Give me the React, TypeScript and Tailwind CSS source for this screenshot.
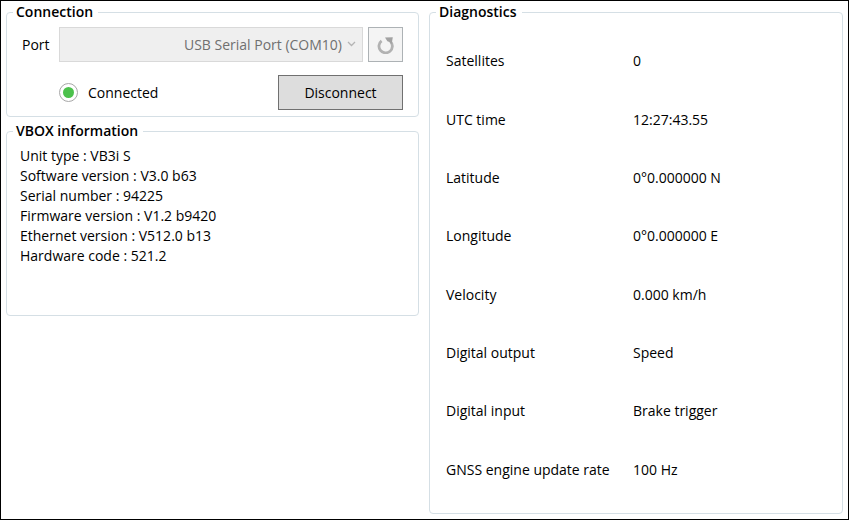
import React, { useState } from 'react'

interface PanelProps {
  title: string
  className?: string
  children: React.ReactNode
}

const vboxInfo = [
  { label: 'Unit type', value: 'VB3i S' },
  { label: 'Software version', value: 'V3.0 b63' },
  { label: 'Serial number', value: '94225' },
  { label: 'Firmware version', value: 'V1.2 b9420' },
  { label: 'Ethernet version', value: 'V512.0 b13' },
  { label: 'Hardware code', value: '521.2' }
]

const diagnostics = [
  { label: 'Satellites', value: '0' },
  { label: 'UTC time', value: '12:27:43.55' },
  { label: 'Latitude', value: '0°0.000000 N' },
  { label: 'Longitude', value: '0°0.000000 E' },
  { label: 'Velocity', value: '0.000 km/h' },
  { label: 'Digital output', value: 'Speed' },
  { label: 'Digital input', value: 'Brake trigger' },
  { label: 'GNSS engine update rate', value: '100 Hz' }
]

const Panel: React.FC<PanelProps> = ({ title, className = '', children }) => (
  <fieldset className={`min-w-0 rounded border border-[#d5dfe5] px-1.5 ${className}`}>
    <legend className="pr-[5px] pl-[3px] font-semibold">{title}</legend>
    {children}
  </fieldset>
)

const RefreshIcon = () => (
  <svg viewBox="0 0 18 18" className="h-[18px] w-[18px]" aria-hidden="true">
    <path d="M4.6 4.8A6.7 6.7 0 1 0 13.6 5.6" fill="none" stroke="#b2b2b2" strokeWidth="2.8" />
    <path d="M8 1.6L15.8 1.2L14.6 8.2L12.4 6L10.4 5.2Z" fill="#a2a2a2" />
  </svg>
)

const ConnectionPanel: React.FC = () => {
  const [connected, setConnected] = useState(true)

  return (
    <Panel title="Connection" className="pb-1.5">
      <div className="flex flex-col gap-[13px] px-[9px] pt-[5px]">
        <div className="flex items-center">
          <label htmlFor="port" className="w-[37px] shrink-0">
            Port
          </label>
          <div className="relative min-w-0 flex-1">
            <select
              id="port"
              disabled={connected}
              className="block h-[35px] w-full appearance-none border border-[#d9d9d9] bg-[#efefef] pr-5 text-right text-[#707070] opacity-100 [text-align-last:right]"
            >
              <option>USB Serial Port (COM10)</option>
            </select>
            <svg
              viewBox="0 0 9 6"
              className="pointer-events-none absolute top-3.5 right-[7px] h-1.5 w-[9px]"
              aria-hidden="true"
            >
              <path d="M1 1L4.5 4.5L8 1" fill="none" stroke="#b4b4b4" strokeWidth="1.3" />
            </svg>
          </div>
          <button
            type="button"
            aria-label="Refresh ports"
            disabled={connected}
            className="ml-[5px] flex h-[35px] w-[35px] items-center justify-center border border-[#adb2b5] bg-[#f4f4f4]"
          >
            <RefreshIcon />
          </button>
        </div>

        <div className="flex items-center justify-between pl-[37px]">
          <label className="flex items-center gap-2.5">
            <input
              type="radio"
              checked={connected}
              readOnly
              className="h-[19px] w-[19px] appearance-none rounded-full border border-[#a8a8a8] bg-clip-content p-[3px] checked:bg-[#4cc14c]"
            />
            Connected
          </label>
          <button
            type="button"
            onClick={() => setConnected(!connected)}
            className="h-[35px] w-[125px] border border-[#707070] bg-[#dddddd]"
          >
            {connected ? 'Disconnect' : 'Connect'}
          </button>
        </div>
      </div>
    </Panel>
  )
}

export default function App() {
  return (
    <main className="grid min-h-screen grid-cols-[413fr_414fr] gap-2.5 border border-black bg-white px-[5px] pt-px pb-[5px] font-['Open_Sans',sans-serif] text-[14px] leading-5 text-black">
      <div className="flex flex-col gap-1">
        <ConnectionPanel />
        <Panel title="VBOX information" className="min-h-[195px]">
          <ul className="px-[7px] pt-[5px]">
            {vboxInfo.map(item => (
              <li key={item.label}>
                {item.label} : {item.value}
              </li>
            ))}
          </ul>
        </Panel>
      </div>

      <Panel title="Diagnostics" className="flex flex-col">
        <dl className="grid flex-1 auto-rows-fr px-2.5 pt-2.5 pb-3.5">
          {diagnostics.map(item => (
            <div key={item.label} className="grid grid-cols-[187px_1fr] items-center">
              <dt>{item.label}</dt>
              <dd>{item.value}</dd>
            </div>
          ))}
        </dl>
      </Panel>
    </main>
  )
}
